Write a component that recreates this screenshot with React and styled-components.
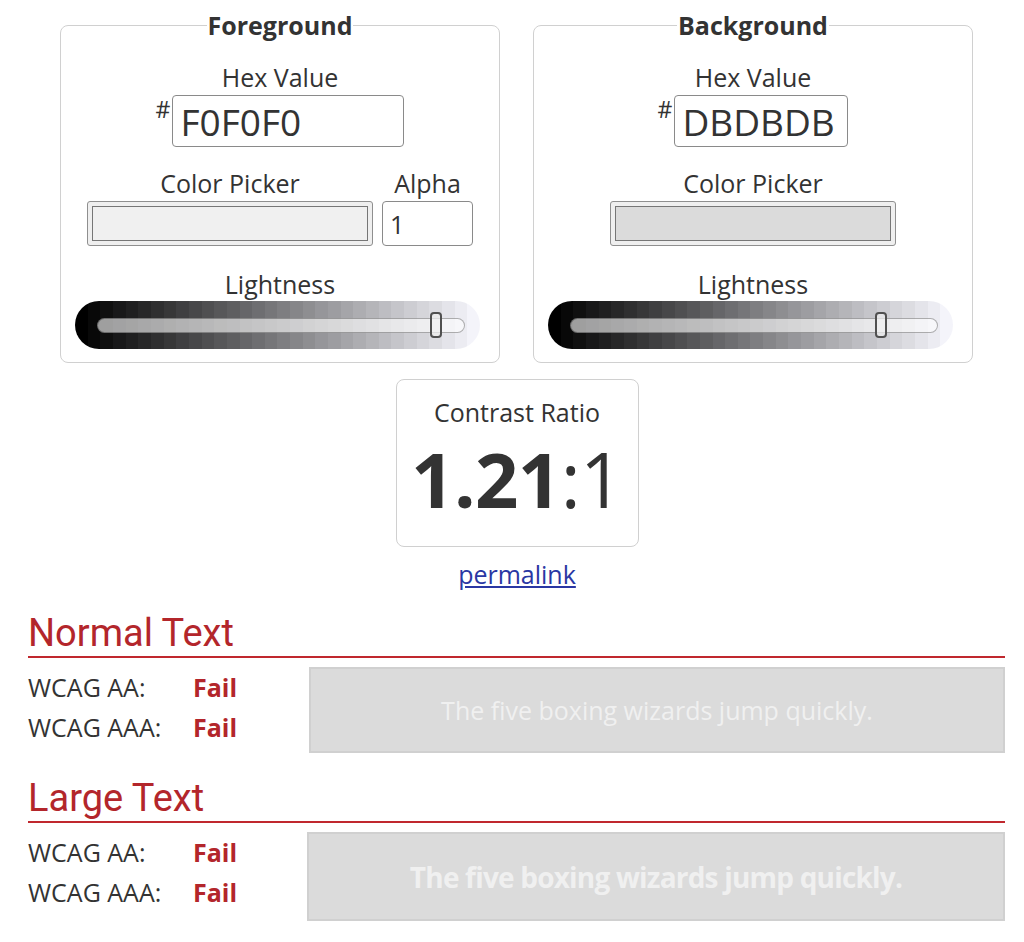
import styled, { createGlobalStyle } from "styled-components";

const GlobalStyle = createGlobalStyle`
  body {
    margin: 0;
    background: #fff;
    color: #333;
    font-family: "Open Sans", "Liberation Sans", sans-serif;
  }
`;

// stepped black -> white strip behind the lightness slider
const steps = 32;
const stripe = Array.from({ length: steps }, (_, i) => {
  const v = Math.round((i / (steps - 1)) * 244);
  const b = Math.min(255, v + Math.round((i / (steps - 1)) * 6));
  const c = `rgb(${v},${v},${b})`;
  const a = ((i / steps) * 100).toFixed(2);
  const z = (((i + 1) / steps) * 100).toFixed(2);
  return `${c} ${a}%, ${c} ${z}%`;
}).join(", ");

function Slider({ value }) {
  return (
    <SliderStrip>
      <Track>
        <Thumb style={{ left: `${value * 353}px` }} />
      </Track>
    </SliderStrip>
  );
}

function HexField({ value, width }) {
  return (
    <HexRow>
      <Hash>#</Hash>
      <HexInput readOnly value={value} width={width} />
    </HexRow>
  );
}

function Swatch({ color }) {
  return (
    <SwatchOuter>
      <SwatchInner color={color} />
    </SwatchOuter>
  );
}

function Results({ title, large, top }) {
  return (
    <Section top={top}>
      <SectionTitle>{title}</SectionTitle>
      <ResultGrid>
        <Checks>
          <CheckRow>
            <span>WCAG AA:</span>
            <Fail>Fail</Fail>
          </CheckRow>
          <CheckRow>
            <span>WCAG AAA:</span>
            <Fail>Fail</Fail>
          </CheckRow>
        </Checks>
        <Sample large={large}>The five boxing wizards jump quickly.</Sample>
      </ResultGrid>
    </Section>
  );
}

export default function App() {
  return (
    <Page>
      <GlobalStyle />
      <Panels>
        <Panel>
          <Legend>Foreground</Legend>
          <Label top={18}>Hex Value</Label>
          <HexField value="F0F0F0" width={232} />
          <PickerRow>
            <Column>
              <Label>Color Picker</Label>
              <Swatch color="#f0f0f0" />
            </Column>
            <Column>
              <Label>Alpha</Label>
              <AlphaInput readOnly value="1" />
            </Column>
          </PickerRow>
          <Label top={21}>Lightness</Label>
          <Slider value={0.94} />
        </Panel>
        <Panel>
          <Legend>Background</Legend>
          <Label top={18}>Hex Value</Label>
          <HexField value="DBDBDB" width={174} />
          <PickerRow>
            <Column>
              <Label>Color Picker</Label>
              <Swatch color="#dbdbdb" />
            </Column>
          </PickerRow>
          <Label top={21}>Lightness</Label>
          <Slider value={0.86} />
        </Panel>
      </Panels>

      <RatioBox>
        <Label>Contrast Ratio</Label>
        <Ratio>
          <b>1.21</b>:1
        </Ratio>
      </RatioBox>
      <Permalink href="#">permalink</Permalink>

      <Results title="Normal Text" top={19} />
      <Results title="Large Text" top={22} large />
    </Page>
  );
}

const Page = styled.div`
  display: flex;
  flex-direction: column;
  align-items: center;
  padding-bottom: 20px;
`;

const Panels = styled.div`
  display: flex;
  gap: 33px;
  align-self: flex-start;
  margin-left: 60px;
  margin-top: 8px;
`;

const Panel = styled.fieldset`
  width: 440px;
  box-sizing: border-box;
  margin: 0;
  padding: 0 0 13px;
  border: 1px solid #d0d0d0;
  border-radius: 8px;
  display: flex;
  flex-direction: column;
  align-items: center;
`;

const Legend = styled.legend`
  margin: 0 auto;
  padding: 0 1px;
  font-size: 25px;
  font-weight: 700;
  line-height: 34px;
  color: #333;
`;

const Label = styled.div`
  margin-top: ${(props) => props.top || 0}px;
  font-size: 25px;
  line-height: 34px;
  color: #333;
  text-align: center;
`;

const HexRow = styled.div`
  display: flex;
  align-items: flex-start;
  gap: 2px;
  margin-top: 1px;
`;

const Hash = styled.span`
  font-size: 23px;
  line-height: 23px;
  margin-top: 3px;
`;

const HexInput = styled.input`
  box-sizing: border-box;
  width: ${(props) => props.width}px;
  height: 52px;
  border: 1px solid #8a8a8a;
  border-radius: 4px;
  padding: 0 7px;
  font-family: "Open Sans", sans-serif;
  font-size: 37px;
  color: #333;
  background: #fff;
  outline: none;
`;

const PickerRow = styled.div`
  display: flex;
  gap: 9px;
  margin-top: 19px;
`;

const Column = styled.div`
  display: flex;
  flex-direction: column;
  align-items: center;
  gap: 1px;
`;

const SwatchOuter = styled.div`
  box-sizing: border-box;
  width: 286px;
  height: 45px;
  padding: 4px;
  background: #efefef;
  border: 1px solid #8f8f8f;
  border-radius: 3px;
`;

const SwatchInner = styled.div`
  height: 100%;
  box-sizing: border-box;
  border: 1px solid #767676;
  background: ${(props) => props.color};
`;

const AlphaInput = styled.input`
  box-sizing: border-box;
  width: 91px;
  height: 45px;
  border: 1px solid #8a8a8a;
  border-radius: 4px;
  padding: 0 7px;
  font-family: "Open Sans", sans-serif;
  font-size: 25px;
  color: #333;
  outline: none;
`;

const SliderStrip = styled.div`
  box-sizing: border-box;
  width: 405px;
  height: 48px;
  margin-right: 5px;
  border-radius: 24px;
  padding: 0 15px 0 22px;
  display: flex;
  align-items: center;
  background: linear-gradient(to right, ${stripe});
`;

const Track = styled.div`
  position: relative;
  flex: 1;
  height: 15px;
  box-sizing: border-box;
  border-radius: 8px;
  border: 1px solid rgba(0, 0, 0, 0.3);
  background: rgba(255, 255, 255, 0.6);
`;

const Thumb = styled.div`
  position: absolute;
  top: -7px;
  width: 12px;
  height: 26px;
  box-sizing: border-box;
  border: 2px solid #505050;
  border-radius: 4px;
  background: rgba(240, 240, 240, 0.7);
`;

const RatioBox = styled.div`
  box-sizing: border-box;
  width: 243px;
  height: 168px;
  margin: 16px 0 0 10px;
  padding-top: 15px;
  border: 1px solid #d0d0d0;
  border-radius: 8px;
  display: flex;
  flex-direction: column;
  align-items: center;
`;

const Ratio = styled.div`
  font-size: 76px;
  line-height: 90px;
  margin-top: 5px;
  letter-spacing: -0.6px;
  color: #333;

  b {
    font-weight: 700;
  }
`;

const Permalink = styled.a`
  margin: 10px 0 0 10px;
  font-size: 25px;
  line-height: 34px;
  color: #2a37a3;
  text-decoration: underline;
`;

const Section = styled.section`
  align-self: stretch;
  margin: ${(props) => props.top}px 19px 0 28px;
`;

const SectionTitle = styled.h2`
  margin: 0;
  font-family: Roboto, "Liberation Sans", sans-serif;
  font-weight: 400;
  font-size: 38px;
  line-height: 46px;
  color: #b3262b;
  border-bottom: 2px solid #c0282e;
`;

const ResultGrid = styled.div`
  display: grid;
  grid-template-columns: 281px 1fr;
  margin-top: 9px;
`;

const Checks = styled.div`
  display: flex;
  flex-direction: column;
`;

const CheckRow = styled.div`
  display: grid;
  grid-template-columns: 165px auto;
  font-size: 25px;
  line-height: 40px;
  color: #333;
`;

const Fail = styled.span`
  font-weight: 700;
  color: #b3262b;
`;

const Sample = styled.div`
  box-sizing: border-box;
  height: ${(props) => (props.large ? 89 : 86)}px;
  margin-left: ${(props) => (props.large ? -2 : 0)}px;
  display: flex;
  align-items: center;
  justify-content: center;
  background: #dbdbdb;
  border: 2px solid #d0d0d0;
  color: #f0f0f0;
  font-size: ${(props) => (props.large ? 28 : 25)}px;
  font-weight: ${(props) => (props.large ? 700 : 400)};
  letter-spacing: ${(props) => (props.large ? -0.8 : 0)}px;
`;
